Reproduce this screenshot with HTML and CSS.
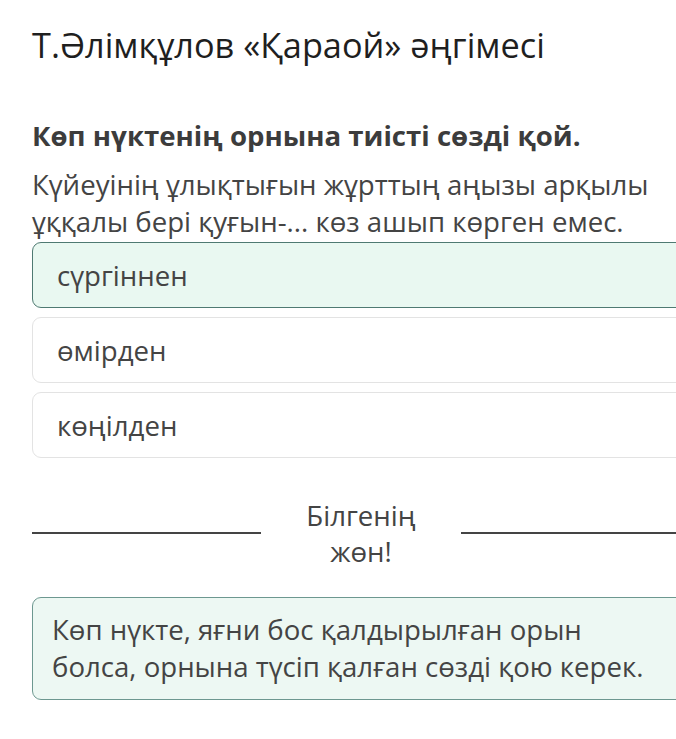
FILE: index.html
```html
<!DOCTYPE html>
<html lang="kk">
<head>
  <meta charset="UTF-8" />
  <meta name="viewport" content="width=device-width, initial-scale=1.0"/>
  <title>Т.Әлімқұлов «Қараой» әңгімесі</title>
  <link rel="stylesheet" href="styles.css">
</head>
<body>
  <div class="container">
    <h1>Т.Әлімқұлов «Қараой» әңгімесі</h1>

    <div class="question">
      <h2>Көп нүктенің орнына тиісті сөзді қой.</h2>
      <p class="prompt">Күйеуінің ұлықтығын жұрттың аңызы арқылы ұққалы бері қуғын-... көз ашып көрген емес.</p>
    </div>

    <div class="options">
      <div class="option selected">сүргіннен</div>
      <div class="option">өмірден</div>
      <div class="option">көңілден</div>
    </div>

    <div class="divider">
      <span class="line"></span>
      <span class="divider-text">Білгенің<br>жөн!</span>
      <span class="line"></span>
    </div>

    <div class="hint">Көп нүкте, яғни бос қалдырылған орын болса, орнына түсіп қалған сөзді қою керек.</div>
  </div>
</body>
</html>
```

FILE: styles.css
```css
body {
  font-family: "Open Sans", "Noto Sans", sans-serif;
  background: #fff;
  margin: 0;
  overflow: hidden;
}
.container {
  width: 658px;
  padding: 25px 0 0 32px;
}
h1 {
  margin: 0;
  font-size: 34.3px;
  font-weight: 400;
  color: #1f1f1f;
  line-height: 40px;
}
.question {
  margin-top: 53px;
}
h2 {
  margin: 0;
  font-size: 27.6px;
  font-weight: 700;
  color: #3c3c3c;
  line-height: 34px;
}
.prompt {
  margin: 14px 0 0;
  font-size: 27.6px;
  color: #444;
  line-height: 37px;
  width: 640px;
}
.options {
  display: flex;
  flex-direction: column;
  gap: 9px;
  margin-top: 2px;
}
.option {
  height: 64px;
  display: flex;
  align-items: center;
  padding: 0 24px;
  border: 1px solid #e3e3e3;
  border-radius: 9px;
  font-size: 27.6px;
  color: #444;
}
.option.selected {
  background: #e9f8f1;
  border-color: #4f7a72;
}
.divider {
  display: flex;
  align-items: center;
  margin-top: 39px;
}
.line {
  flex: 1;
  border-top: 2px solid #444;
}
.divider-text {
  width: 200px;
  text-align: center;
  font-size: 27.6px;
  color: #444;
  line-height: 36px;
}
.hint {
  margin-top: 28px;
  padding: 13px 19px 14px;
  background: #edf8f3;
  border: 1px solid #6d9890;
  border-radius: 9px;
  font-size: 27.6px;
  color: #444;
  line-height: 37px;
}
```
